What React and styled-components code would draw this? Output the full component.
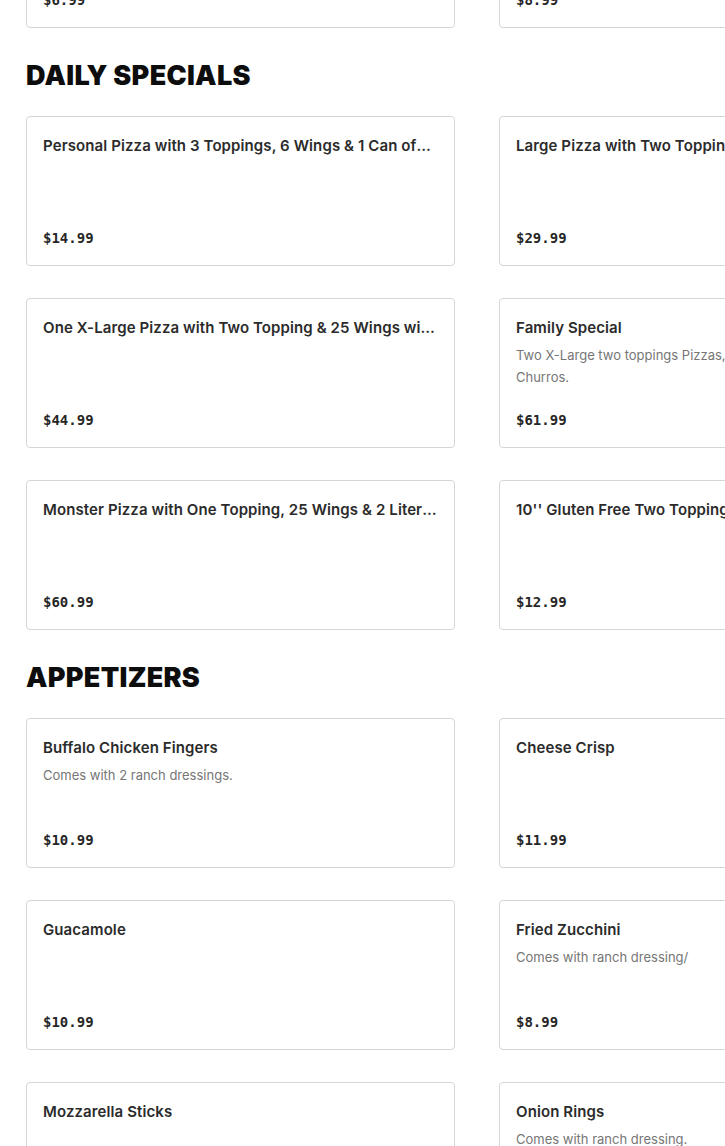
import React from "react";
import styled, { createGlobalStyle } from "styled-components";

const GlobalStyle = createGlobalStyle`
    html, body {
        margin: 0;
        padding: 0;
        background: #fff;
        overflow: hidden;
    }
    body {
        font-family: "Inter", "Liberation Sans", sans-serif;
        color: #2a2a2a;
    }
`;

const Page = styled.div`
    margin-top: -122px;
    padding-left: 26px;
    width: 1000px;
`;

const SectionTitle = styled.h2`
    margin: 31px 0 23px;
    font-family: "Inter", "Liberation Sans", sans-serif;
    font-size: 27px;
    font-weight: 900;
    line-height: 34px;
    letter-spacing: 0.3px;
    color: #0d0d0d;
`;

const Grid = styled.div`
    display: grid;
    grid-template-columns: 429px 429px;
    column-gap: 44px;
    row-gap: 32px;
`;

const Card = styled.div`
    box-sizing: border-box;
    height: 150px;
    border: 1px solid #d6d6d6;
    border-radius: 4px;
    padding: 18px 16px 16px;
    display: flex;
    flex-direction: column;
    min-width: 0;
`;

const Name = styled.div`
    font-size: 15px;
    font-weight: 600;
    line-height: 22px;
    letter-spacing: 0.1px;
    color: #2b2b2b;
    display: -webkit-box;
    -webkit-line-clamp: 1;
    -webkit-box-orient: vertical;
    overflow: hidden;
    flex-shrink: 0;
`;

const Desc = styled.div`
    margin-top: 5px;
    font-size: 13px;
    line-height: 22px;
    color: #767676;
    display: -webkit-box;
    -webkit-line-clamp: 2;
    -webkit-box-orient: vertical;
    overflow: hidden;
    flex-shrink: 0;
`;

const Price = styled.div`
    margin-top: auto;
    font-family: "DejaVu Sans Mono", "Liberation Mono", monospace;
    font-size: 14px;
    font-weight: 700;
    line-height: 22px;
    color: #262626;
`;

const top = [
    { name: "Garlic Knots", price: "$6.99" },
    { name: "Cinnamon Knots", price: "$8.99" },
];

const specials = [
    { name: "Personal Pizza with 3 Toppings, 6 Wings & 1 Can of Soda", price: "$14.99" },
    { name: "Large Pizza with Two Topping, 12 Wings & 2 Liter Soda", price: "$29.99" },
    { name: "One X-Large Pizza with Two Topping & 25 Wings with 2 Liter Soda", price: "$44.99" },
    {
        name: "Family Special",
        desc: "Two X-Large two toppings Pizzas, 25 Wings, 2 Liter Soda and Churros.",
        price: "$61.99",
    },
    { name: "Monster Pizza with One Topping, 25 Wings & 2 Liter Soda", price: "$60.99" },
    { name: "10'' Gluten Free Two Toppings Pizza", price: "$12.99" },
];

const appetizers = [
    { name: "Buffalo Chicken Fingers", desc: "Comes with 2 ranch dressings.", price: "$10.99" },
    { name: "Cheese Crisp", price: "$11.99" },
    { name: "Guacamole", price: "$10.99" },
    { name: "Fried Zucchini", desc: "Comes with ranch dressing/", price: "$8.99" },
    { name: "Mozzarella Sticks", price: "$9.99" },
    { name: "Onion Rings", desc: "Comes with ranch dressing.", price: "$8.99" },
];

const MenuCard = ({ item }) => (
    <Card>
        <Name>{item.name}</Name>
        {item.desc && <Desc>{item.desc}</Desc>}
        <Price>{item.price}</Price>
    </Card>
);

const App = () => {
    return (
        <>
            <GlobalStyle />
            <Page>
                <Grid>
                    {top.map((it) => <MenuCard key={it.name} item={it} />)}
                </Grid>
                <SectionTitle>DAILY SPECIALS</SectionTitle>
                <Grid>
                    {specials.map((it) => <MenuCard key={it.name} item={it} />)}
                </Grid>
                <SectionTitle>APPETIZERS</SectionTitle>
                <Grid>
                    {appetizers.map((it) => <MenuCard key={it.name} item={it} />)}
                </Grid>
            </Page>
        </>
    );
};

export default App;
